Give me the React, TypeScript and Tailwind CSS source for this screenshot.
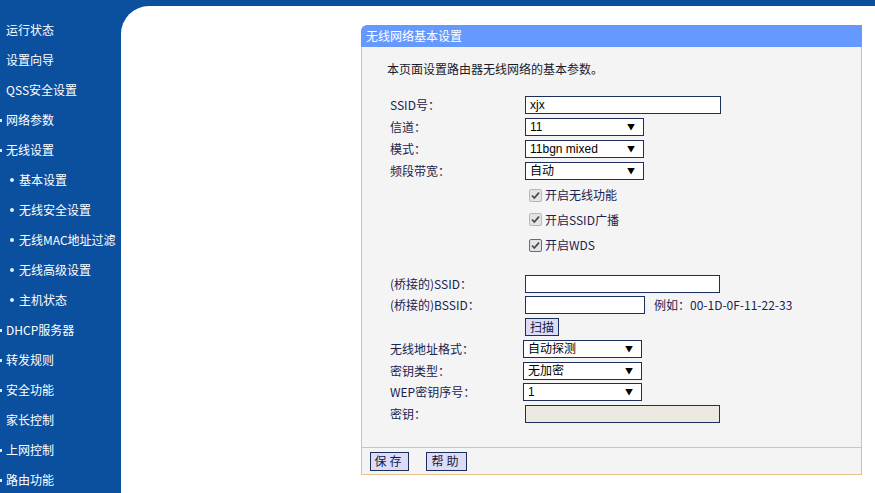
import React from "react";

const FONT = { fontFamily: '"Noto Sans CJK SC", "Liberation Sans", sans-serif' };

const navItems: { t: string; dot?: boolean; sub?: boolean }[] = [
  { t: "运行状态" },
  { t: "设置向导" },
  { t: "QSS安全设置" },
  { t: "网络参数", dot: true },
  { t: "无线设置", dot: true },
  { t: "基本设置", sub: true },
  { t: "无线安全设置", sub: true },
  { t: "无线MAC地址过滤", sub: true },
  { t: "无线高级设置", sub: true },
  { t: "主机状态", sub: true },
  { t: "DHCP服务器", dot: true },
  { t: "转发规则", dot: true },
  { t: "安全功能", dot: true },
  { t: "家长控制" },
  { t: "上网控制", dot: true },
  { t: "路由功能", dot: true },
];

function Select({ value, w = "w-[119px]", ml = "" }: { value: string; w?: string; ml?: string }) {
  return (
    <div className={`${w} ${ml} h-[18px] border border-[#1c2f5c] bg-white flex items-center justify-between pl-[4px] pr-[8px] text-[12px] text-black`}>
      <span className="leading-none" style={{ fontFamily: '"Liberation Sans", "Noto Sans CJK SC", sans-serif' }}>{value}</span>
      <span className="text-[8px] leading-none">▼</span>
    </div>
  );
}

function Input({ value = "", w, disabled = false }: { value?: string; w: string; disabled?: boolean }) {
  return (
    <div className={`${w} h-[18px] border border-[#1c2f5c] ${disabled ? "bg-[#ece9e2]" : "bg-white"} flex items-center pl-[4px] text-[12px] text-black`}>
      <span className="leading-none" style={{ fontFamily: '"Liberation Sans", sans-serif' }}>{value}</span>
    </div>
  );
}

function Check({ blue = false }: { blue?: boolean }) {
  return (
    <svg width="13" height="13" viewBox="0 0 13 13" className="shrink-0">
      <rect x="0.5" y="0.5" width="12" height="12" rx="1.5" fill="#e4e4e4" stroke={blue ? "#3c6fd0" : "#b8b8b8"} />
      <path d="M3 6.5 L5.3 9 L10 3.6" stroke="#4a4a4a" strokeWidth="1.8" fill="none" />
    </svg>
  );
}

function Row({ label, h, children }: { label?: string; h: string; children?: React.ReactNode }) {
  return (
    <div className={`flex items-center ${h}`}>
      <div className="w-[135px] shrink-0 text-[12px] text-[#1a2350] leading-none">{label}</div>
      {children}
    </div>
  );
}

export default function App() {
  return (
    <div className="flex w-[875px] h-[493px] bg-[#0b4f9f] overflow-hidden" style={FONT}>
      <div className="w-[121px] shrink-0 pt-[15px] flex flex-col">
        {navItems.map((it) => (
          <div key={it.t} className="h-[30px] shrink-0 flex items-center text-[12px] text-white leading-none">
            {it.sub ? (
              <>
                <span className="ml-[10px] w-[4px] h-[4px] rounded-full bg-[#d8f4ff]" />
                <span className="ml-[5px]">{it.t}</span>
              </>
            ) : (
              <>
                <span className={`w-[2px] h-[3px] ${it.dot ? "bg-[#dfe9f7]" : "bg-transparent"}`} />
                <span className="ml-[4px]">{it.t}</span>
              </>
            )}
          </div>
        ))}
      </div>
      <div className="flex-1 mt-[6px] bg-white rounded-tl-[28px] pt-[19px] pl-[240px]">
        <div className="w-[501px] flex flex-col">
          <div className="h-[22px] bg-[#6699fe] rounded-tl-[6px] flex items-center pl-[5px] text-[12px] text-white leading-none">
            无线网络基本设置
          </div>
          <div className="h-[400px] bg-[#f4f4f4] border-x border-[#e6c08a] pl-[28px] flex flex-col">
            <div className="h-[20px] mt-[12px] flex items-center text-[12px] text-[#1a1a2a] leading-none -ml-[3px]">
              本页面设置路由器无线网络的基本参数。
            </div>
            <div className="mt-[15px]">
              <Row label="SSID号：" h="h-[22px]">
                <Input value="xjx" w="w-[196px]" />
              </Row>
              <Row label="信道：" h="h-[22px]">
                <Select value="11" />
              </Row>
              <Row label="模式：" h="h-[22px]">
                <Select value="11bgn mixed" />
              </Row>
              <Row label="频段带宽：" h="h-[22px]">
                <Select value="自动" />
              </Row>
            </div>
            <div className="mt-[1px] pl-[139px] flex flex-col text-[12px] text-[#1a2350] leading-none">
              <div className="h-[24px] flex items-center gap-[3px]"><Check /><span>开启无线功能</span></div>
              <div className="h-[25px] flex items-center gap-[3px]"><Check /><span>开启SSID广播</span></div>
              <div className="h-[26px] flex items-center gap-[3px]"><Check blue /><span>开启WDS</span></div>
            </div>
            <div className="mt-[15px]">
              <Row label="(桥接的)SSID：" h="h-[21px]">
                <Input w="w-[195px]" />
              </Row>
              <Row label="(桥接的)BSSID：" h="h-[21px]">
                <Input w="w-[120px]" />
                <span className="ml-[9px] text-[12px] text-[#1a2350] leading-none">例如：00-1D-0F-11-22-33</span>
              </Row>
              <Row h="h-[23px]">
                <div className="h-[18px] px-[4px] border border-[#1c2f5c] bg-[#dcdcf8] flex items-center text-[12px] text-[#101a40] leading-none">扫描</div>
              </Row>
              <Row label="无线地址格式：" h="h-[22px]">
                <Select value="自动探测" ml="-ml-[2px]" />
              </Row>
              <Row label="密钥类型：" h="h-[21px]">
                <Select value="无加密" ml="-ml-[2px]" />
              </Row>
              <Row label="WEP密钥序号：" h="h-[22px]">
                <Select value="1" ml="-ml-[2px]" />
              </Row>
              <Row label="密钥：" h="h-[22px]">
                <Input w="w-[195px]" disabled />
              </Row>
            </div>
          </div>
          <div className="h-[28px] bg-[#f4f4f4] border border-[#e6c08a] flex items-center pl-[8px] gap-[17px]">
            <div className="h-[19px] w-[39px] border border-[#1c2f5c] bg-[#dcdcf8] flex items-center justify-center text-[12px] text-[#101a40] leading-none tracking-[3px]">保存</div>
            <div className="h-[19px] w-[41px] border border-[#1c2f5c] bg-[#dcdcf8] flex items-center justify-center text-[12px] text-[#101a40] leading-none tracking-[3px]">帮助</div>
          </div>
        </div>
      </div>
    </div>
  );
}
